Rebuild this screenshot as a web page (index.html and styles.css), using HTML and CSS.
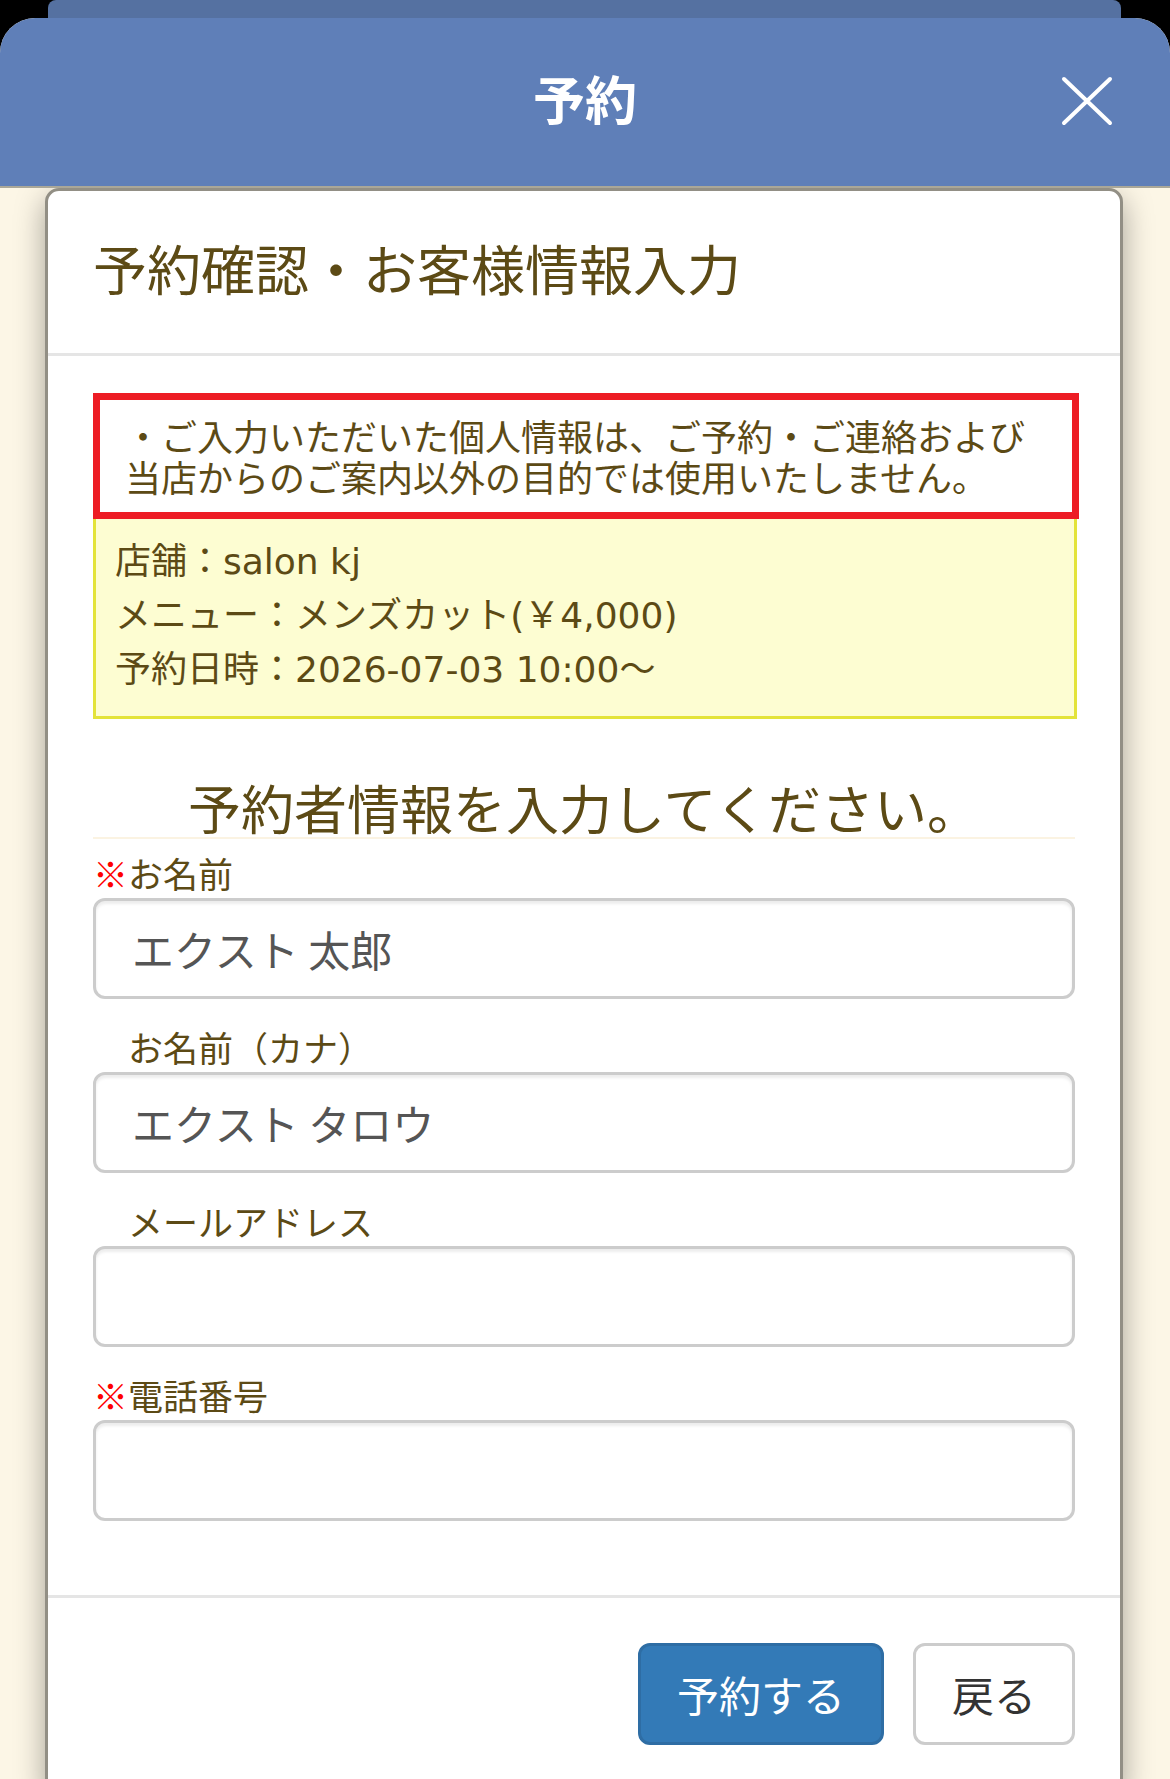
FILE: index.html
```html
<!DOCTYPE html>
<html lang="ja">
<head>
  <meta charset="UTF-8" />
  <meta name="viewport" content="width=device-width, initial-scale=1.0"/>
  <title>予約</title>
  <link rel="stylesheet" href="styles.css">
</head>
<body>
  <div class="sheet-back"></div>
  <div class="sheet">
    <header class="sheet-header">
      <h1 class="sheet-title">予約</h1>
      <button class="sheet-close" type="button" aria-label="閉じる">
        <svg width="52" height="50" viewBox="0 0 52 50">
          <path d="M3 3 L49 47 M49 3 L3 47" stroke="#fff" stroke-width="4" stroke-linecap="round" fill="none"/>
        </svg>
      </button>
    </header>

    <div class="sheet-body">
      <div class="modal-content">
        <div class="modal-header">
          <h4 class="modal-title">予約確認・お客様情報入力</h4>
        </div>

        <div class="modal-body">
          <div class="notice">・ご入力いただいた個人情報は、ご予約・ご連絡および<br>当店からのご案内以外の目的では使用いたしません。</div>

          <div class="summary">
            <p>店舗：salon kj</p>
            <p>メニュー：メンズカット(￥4,000)</p>
            <p>予約日時：2026-07-03 10:00～</p>
          </div>

          <h3 class="form-heading">予約者情報を入力してください。</h3>

          <form class="guest-form">
            <div class="form-group">
              <label><span class="req">※</span>お名前</label>
              <input class="form-control" type="text" value="エクスト 太郎">
            </div>
            <div class="form-group">
              <label><span class="req req-hidden">※</span>お名前（カナ）</label>
              <input class="form-control" type="text" value="エクスト タロウ">
            </div>
            <div class="form-group">
              <label><span class="req req-hidden">※</span>メールアドレス</label>
              <input class="form-control" type="email" value="">
            </div>
            <div class="form-group">
              <label><span class="req">※</span>電話番号</label>
              <input class="form-control" type="tel" value="">
            </div>
          </form>
        </div>

        <div class="modal-footer">
          <button class="btn btn-primary" type="button">予約する</button>
          <button class="btn btn-default" type="button">戻る</button>
        </div>
      </div>
    </div>
  </div>
</body>
</html>
```

FILE: styles.css
```css
html, body {
  height: 1779px;
}

body {
  margin: 0;
  background: #000;
  font-family: "DejaVu Sans", "Noto Sans CJK JP", sans-serif;
  color: #5c4a15;
  overflow: hidden;
}

.sheet-back {
  height: 18px;
  margin: 0 49px 0 48px;
  background: #5571a1;
  border-radius: 8px 8px 0 0;
}

.sheet {
  background: #fcf6e6;
  border-radius: 35px 35px 0 0;
  height: 1761px;
}

.sheet-header {
  position: relative;
  height: 160px;
  padding-bottom: 8px;
  background: #5f7fb8;
  border-radius: 35px 35px 0 0;
  border-bottom: 2px solid #aaa798;
  text-align: center;
}

.sheet-title {
  margin: 0;
  font-family: "Noto Sans CJK JP", sans-serif;
  font-size: 52px;
  font-weight: bold;
  line-height: 160px;
  color: #fff;
}

.sheet-close {
  position: absolute;
  top: 58px;
  right: 57px;
  width: 52px;
  height: 50px;
  padding: 0;
  border: 0;
  background: none;
}

.sheet-close svg {
  display: block;
}

.sheet-body {
  padding: 0 47px 0 45px;
}

.modal-content {
  background: #fff;
  border: 3px solid #928f85;
  border-radius: 14px;
  box-shadow: 0 10px 30px rgba(0, 0, 0, 0.35);
}

.modal-header {
  padding: 38px 45px 47px;
  border-bottom: 3px solid #e5e5e5;
}

.modal-title {
  margin: 0;
  font-family: "Noto Sans CJK JP", sans-serif;
  font-size: 54px;
  font-weight: normal;
  line-height: 77px;
}

.modal-body {
  padding: 37px 45px 74px;
}

.notice {
  margin-right: -4px;
  padding: 15px 20px 15px 25px;
  border: 7px solid #ed1c24;
  font-family: "Noto Sans CJK JP", sans-serif;
  font-size: 36px;
  line-height: 41px;
}

.summary {
  margin-right: -2px;
  padding: 16px 19px 19px;
  background: #fdfdd2;
  border: 3px solid #e3e33a;
  border-top: 0;
  font-size: 36px;
}

.summary p {
  margin: 0;
  height: 54px;
  line-height: 54px;
}

.form-heading {
  margin: 58px 0 0;
  padding-bottom: 0;
  border-bottom: 2px solid #fbf3e2;
  font-family: "Noto Sans CJK JP", sans-serif;
  font-size: 53px;
  font-weight: normal;
  line-height: 60px;
  text-align: center;
}

.guest-form {
  margin: 14px 0 0;
}

.form-group {
  margin-bottom: 28px;
}

.form-group:last-child {
  margin-bottom: 0;
}

.form-group label {
  display: block;
  height: 40px;
  margin-bottom: 5px;
  font-family: "Noto Sans CJK JP", sans-serif;
  font-size: 35px;
  line-height: 40px;
}

.req {
  color: #f00;
}

.req-hidden {
  visibility: hidden;
}

.form-control {
  display: block;
  box-sizing: border-box;
  width: 100%;
  height: 101px;
  margin: 0;
  padding: 0 36px;
  border: 3px solid #ccc;
  border-radius: 12px;
  box-shadow: inset 0 3px 3px rgba(0, 0, 0, 0.075);
  background: #fff;
  font-family: "Noto Sans CJK JP", sans-serif;
  font-size: 42px;
  color: #555;
  outline: none;
}

.modal-footer {
  display: flex;
  justify-content: flex-end;
  gap: 29px;
  padding: 45px;
  border-top: 3px solid #e5e5e5;
}

.btn {
  height: 102px;
  padding: 0 36px;
  border: 3px solid transparent;
  border-radius: 12px;
  font-family: "Noto Sans CJK JP", sans-serif;
  font-size: 42px;
  line-height: 96px;
}

.btn-primary {
  background: #337ab7;
  border-color: #2e6da4;
  color: #fff;
}

.btn-default {
  background: #fff;
  border-color: #ccc;
  color: #333;
}
```
